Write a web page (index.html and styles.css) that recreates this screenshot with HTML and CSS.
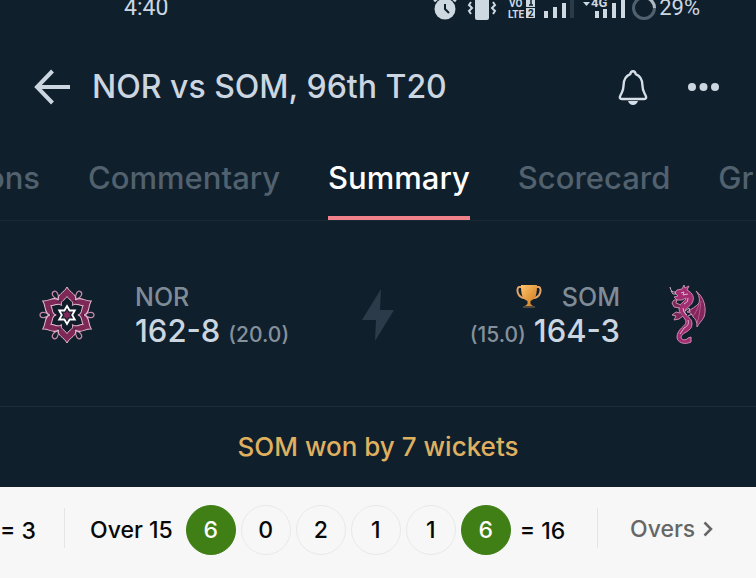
FILE: index.html
```html
<!DOCTYPE html>
<html lang="en">
<head>
<meta charset="utf-8">
<meta name="viewport" content="width=device-width, initial-scale=1">
<title>NOR vs SOM, 96th T20</title>
<link rel="stylesheet" href="styles.css">
</head>
<body>
<div class="status">
  <span class="clock">4:40</span>
  <svg class="status-icons" width="224" height="20" viewBox="0 0 224 20" aria-hidden="true">
    <g fill="#cdd8e1">
      <circle cx="12" cy="9" r="10.500"/>
      <path d="M1 1l5-4M23 1l-5-4" stroke="#cdd8e1" stroke-width="3"/>
      <path d="M12 4v5l4 4" fill="none" stroke="#101f2c" stroke-width="2"/>
      <rect x="42" y="-4" width="14" height="24" rx="2"/>
      <path d="M38 2l-2 3 3 3-3 3 2 3M60 2l2 3-3 3 3 3-2 3" fill="none" stroke="#cdd8e1" stroke-width="2"/>
      <rect x="93" y="-4" width="9" height="11"/><rect x="93" y="8" width="9" height="10"/>
      <text x="76" y="7" class="tiny">VO</text><text x="75" y="18" class="tiny">LTE</text>
      <path d="M98 -2v7M96 5h4" stroke="#101f2c" stroke-width="1.500"/>
      <text x="95" y="17" class="tiny tiny-dark">2</text>
      <rect x="111" y="11" width="4" height="7"/><rect x="120" y="7" width="4" height="11"/><rect x="129" y="3" width="4" height="15"/>
      <rect x="137" y="-2" width="4" height="20" fill="#2b3a47"/>
      <path d="M150 2h7l-3.500 4z"/>
      <text x="158" y="7" class="tiny network">4G</text>
      <rect x="162" y="11" width="4" height="7"/><rect x="170" y="9" width="4" height="9"/><rect x="179" y="3" width="4" height="15"/><rect x="188" y="-2" width="4" height="20"/>
    </g>
    <circle cx="211" cy="8" r="10.500" fill="none" stroke="#526170" stroke-width="3"/>
    <path d="M211 -2.500A10.500 10.500 0 0 1 221.500 8" fill="none" stroke="#aeb9c3" stroke-width="3"/>
  </svg>
  <span class="battery">29%</span>
</div>

<header class="header">
  <button class="icon-button" aria-label="Back">
    <svg width="36" height="36" viewBox="0 0 36 36" fill="none" stroke="#cbd6e0" stroke-width="4"><path d="M36 18H3M18.500 2L3 18 18.500 34"/></svg>
  </button>
  <h1 class="title">NOR vs SOM, 96th T20</h1>
  <button class="icon-button" aria-label="Notifications">
    <svg width="30" height="36" viewBox="0 0 30 36"><path d="M15 2.200C12.800 2.200 12.500 3.800 12.200 5.200 7.500 7 5.800 11 5.600 16 5.400 22.500 4 23.200 2.500 26.200 1.200 28.800 1.800 30 4 30H26C28.200 30 28.800 28.800 27.500 26.200 26 23.200 24.600 22.500 24.400 16 24.200 11 22.500 7 17.800 5.200 17.500 3.800 17.200 2.200 15 2.200Z" fill="none" stroke="#d5dfe8" stroke-width="2.400"/><path d="M10 32H20Q18.500 36 15 36T10 32Z" fill="#d5dfe8"/></svg>
  </button>
  <button class="icon-button more" aria-label="More options">
    <svg width="32" height="8" viewBox="0 0 32 8" fill="#cbd6e0"><circle cx="4" cy="4" r="4"/><circle cx="15.500" cy="4" r="4"/><circle cx="27" cy="4" r="4"/></svg>
  </button>
</header>

<nav class="tabs">
  <a class="tab" href="#">ons</a>
  <a class="tab" href="#">Commentary</a>
  <a class="tab active" href="#" aria-current="page">Summary</a>
  <a class="tab" href="#">Scorecard</a>
  <a class="tab" href="#">Gr</a>
</nav>

<main>
  <section class="score">
    <svg class="badge" width="60" height="60" viewBox="-30 -30 60 60" aria-hidden="true">
      <defs>
        <path id="petal" d="M-8.500-14.800C-10-21-3-22 0-28C3-22 10-21 8.500-14.800"/>
        <path id="inner" d="M-5.500-9.500C-7-14-2-15 0-18.500C2-15 7-14 5.500-9.500"/>
        <path id="loop" d="M0-18C-4-22-3-27 0-27S4-22 0-18"/>
      </defs>
      <g fill="none" stroke="#c58aa9" stroke-width="1.200">
        <use href="#loop" transform="rotate(30)"/><use href="#loop" transform="rotate(90)"/><use href="#loop" transform="rotate(150)"/><use href="#loop" transform="rotate(210)"/><use href="#loop" transform="rotate(270)"/><use href="#loop" transform="rotate(330)"/>
      </g>
      <g fill="#7d2857" stroke="#e6bdd1" stroke-width="1">
        <use href="#petal"/><use href="#petal" transform="rotate(60)"/><use href="#petal" transform="rotate(120)"/><use href="#petal" transform="rotate(180)"/><use href="#petal" transform="rotate(240)"/><use href="#petal" transform="rotate(300)"/>
      </g>
      <circle r="16" fill="#7d2857"/>
      <circle r="10.500" fill="#101c29"/>
      <g fill="#101c29" stroke="#e6bdd1" stroke-width="1">
        <use href="#inner"/><use href="#inner" transform="rotate(60)"/><use href="#inner" transform="rotate(120)"/><use href="#inner" transform="rotate(180)"/><use href="#inner" transform="rotate(240)"/><use href="#inner" transform="rotate(300)"/>
      </g>
      <path d="M0-9L2.600-4.500 7.800-4.500 5.200 0 7.800 4.500 2.600 4.500 0 9-2.600 4.500-7.800 4.500-5.200 0-7.800-4.500-2.600-4.500Z" fill="#101c29" stroke="#fff" stroke-width="1.800"/>
      <path d="M0-5L1.300-2.200 4.300-2.500 2.600 0 4.300 2.500 1.300 2.200 0 5-1.300 2.200-4.300 2.500-2.600 0-4.300-2.500-1.300-2.200Z" fill="#7d2857"/>
    </svg>
    <div class="team">
      <div class="name">NOR</div>
      <div class="runs"><strong>162-8</strong><span class="overs">(20.0)</span></div>
    </div>
    <svg class="bolt" width="32" height="52" viewBox="0 0 32 52" fill="#2b3b49" aria-hidden="true"><path d="M19 0L0 31H14L13 52 32 21H18Z"/></svg>
    <div class="team away">
      <div class="name">
        <svg width="26" height="25" viewBox="0 0 26 25" aria-hidden="true">
          <defs><linearGradient id="gold" x2="1" y2="1"><stop stop-color="#ffc36a"/><stop offset="1" stop-color="#cd791d"/></linearGradient></defs>
          <path d="M6 3H3C0 4 1 14 9 14M20 3H23C26 4 25 14 17 14" fill="none" stroke="#dfa267" stroke-width="2"/>
          <path d="M5 1H21C21 10 20 15 14.500 17V20L17 22H9L11.500 20V17C6 15 5 10 5 1Z" fill="url(#gold)"/>
          <path d="M7 22H19V24H7Z" fill="#4c4842"/>
        </svg>
        <span>SOM</span>
      </div>
      <div class="runs"><span class="overs">(15.0)</span><strong>164-3</strong></div>
    </div>
    <svg class="dragon" width="40" height="60" viewBox="0 0 40 60" aria-hidden="true">
      <g stroke="#c78bb0" stroke-width="1" stroke-linejoin="round">
        <path d="M28 6C36 12 39 23 36 32 34 36 31 38 29 42 29 37 28 34 25 32 24 29 22 27 19 27 23 24 28 22 31 18 32 14 31 10 28 6Z" fill="#84265b"/>
        <path d="M33 16C32 25 31 32 29 39M31 19C29 25 27 29 25 31" fill="none" stroke="#b4588d"/>
        <path d="M9 5L14 4 16 0 17 3 21 1 19 5C25 8 27 13 24 18 22 22 16 23 17 28 18 32 24 32 24 39 24 47 14 47 13 52 13 55 18 56 20 53L23 52 23 57C17 60 9 58 9 52 9 44 18 41 18 37 18 33 10 29 11 22 12 18 18 16 18 13L14 15 9 15 6 12 10 11 7 8Z" fill="#a42c70"/>
        <path d="M13 20L8 18 9 15 6 15 4 18 6 22 12 23M12 28L8 27 4 30 8 31 6 35 11 34 15 31" fill="#7a2858"/>
        <path d="M2 2Q3 8 8 7M3 6L5 9 8 9M13 8L16 7 15 10 20 9M20 13Q21 17 16 19M15 23Q15 28 19 30M20 35Q22 40 16 43L12 49M17 26L21 23 22 27M20 31L24 29" fill="none" stroke="#d6b3ce"/>
      </g>
    </svg>
  </section>
  <p class="result">SOM won by 7 wickets</p>
  <section class="timeline">
    <span class="total previous">= 3</span>
    <div class="over">
      <span class="label">Over 15</span>
      <span class="ball six">6</span><span class="ball">0</span><span class="ball">2</span><span class="ball">1</span><span class="ball">1</span><span class="ball six">6</span>
      <span class="total">= 16</span>
    </div>
    <a class="all" href="#">Overs
      <svg width="10" height="16" viewBox="0 0 10 16" fill="none" stroke="#666" stroke-width="2.500" aria-hidden="true"><path d="M1.500 1.500L8 8 1.500 14.500"/></svg>
    </a>
  </section>
</main>
</body>
</html>
```
FILE: styles.css
```css
* { box-sizing: border-box; }

body {
  margin: 0;
  min-height: 100vh;
  display: flex;
  flex-direction: column;
  overflow: hidden;
  background: #101f2c;
  color: #cbd6e0;
  font-family: Inter, "Liberation Sans", sans-serif;
  font-weight: 500;
}

.status {
  display: flex;
  align-items: flex-start;
  height: 43px;
  padding: 0 56px 0 124px;
  overflow: hidden;
  font: 23px/28px Roboto, sans-serif;
}

.clock, .battery { margin-top: -6px; }
.status-icons { margin-left: auto; }
.battery { margin-left: 2px; font-size: 22px; }
.tiny { font: bold 10px Roboto, sans-serif; }
.tiny-dark { fill: #101f2c; }
.network { font-size: 13px; }

.header {
  display: flex;
  align-items: center;
  height: 87px;
  padding: 0 36px 0 34px;
}

.icon-button {
  display: flex;
  padding: 0;
  border: 0;
  background: none;
}

.title {
  flex: 1;
  margin: 0 0 0 22px;
  font-size: 32px;
  font-weight: 500;
  line-height: 40px;
  white-space: nowrap;
}

.more { margin-left: 40px; }

.tabs {
  display: flex;
  gap: 48px;
  height: 91px;
  margin-left: -14px;
  border-bottom: 1px solid #192733;
  font-size: 31px;
}

.tab {
  padding-top: 30px;
  border-bottom: 4px solid transparent;
  color: #52616e;
  line-height: 36px;
  text-decoration: none;
  white-space: nowrap;
}

.active { border-color: #f0808a; color: #fff; }

main {
  flex: 1;
  display: flex;
  flex-direction: column;
}

.score {
  display: grid;
  grid-template-columns: 60px 1fr 32px 1fr 50px;
  column-gap: 38px;
  align-items: center;
  height: 186px;
  padding: 2px 48px 0 37px;
  border-bottom: 1px solid #1e2c38;
}

.team { padding-top: 4px; }

.name {
  display: flex;
  align-items: center;
  gap: 20px;
  color: #7f8c98;
  font-size: 25px;
  line-height: 32px;
}

.runs {
  display: flex;
  align-items: baseline;
  gap: 8px;
  font-size: 31px;
  line-height: 36px;
  white-space: nowrap;
}

.runs strong { font-weight: 500; }
.overs { color: #84919d; font-size: 21px; }
.away .name, .away .runs { justify-content: flex-end; }
.dragon { justify-self: end; }

.result {
  margin: 0;
  color: #dfb060;
  font-size: 26px;
  line-height: 80px;
  text-align: center;
}

.timeline {
  flex: 1;
  display: flex;
  align-items: flex-start;
  padding-top: 17px;
  background: #f7f7f7;
  color: #080808;
  font-size: 23px;
  line-height: 50px;
  white-space: nowrap;
}

.total { padding-top: 2px; }
.previous { width: 64px; }

.over {
  flex: 1;
  display: flex;
  align-items: center;
  gap: 5px;
}

.over, .all { position: relative; }

.over::before, .all::before {
  content: "";
  position: absolute;
  top: 4px;
  left: 0;
  height: 40px;
  border-left: 1px solid #e5e5e5;
}

.label { margin: 0 8px 0 26px; }

.ball {
  width: 50px;
  height: 50px;
  border: 1px solid #e9e9e9;
  border-radius: 50%;
  line-height: 48px;
  text-align: center;
}

.six { border-color: #3f7f16; background: #3f7f16; color: #fff; }
.over .total { margin-left: 4px; }

.all {
  display: flex;
  align-items: center;
  gap: 8px;
  width: 159px;
  padding-left: 33px;
  color: #666;
  text-decoration: none;
}
```
